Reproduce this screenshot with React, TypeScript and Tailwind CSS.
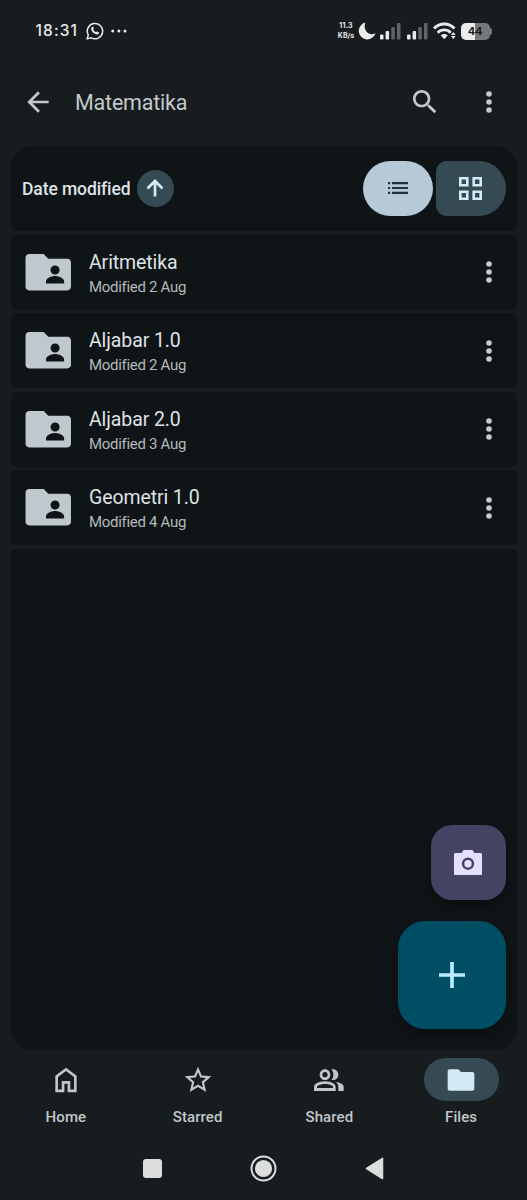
import clsx from 'clsx'
import type { ReactNode } from 'react'

const files = [
  { name: 'Aritmetika', modified: 'Modified 2 Aug' },
  { name: 'Aljabar 1.0', modified: 'Modified 2 Aug' },
  { name: 'Aljabar 2.0', modified: 'Modified 3 Aug' },
  { name: 'Geometri 1.0', modified: 'Modified 4 Aug' },
]

const tabs = [
  { label: 'Home', icon: 'M6 19.2h2.8v-6.4h6.4v6.4H18v-9.4L12 5.3 6 9.8v9.4zM4 21.2V8.8l8-6 8 6v12.4h-6.8v-6.4h-2.4v6.4H4z' },
  {
    label: 'Starred',
    icon: 'M22 9.24l-7.19-.62L12 2 9.19 8.63 2 9.24l5.46 4.73L5.82 21 12 17.27 18.18 21l-1.63-7.03L22 9.24zM12 15.4l-3.76 2.27 1-4.28-3.32-2.88 4.38-.38L12 6.1l1.71 4.04 4.38.38-3.32 2.88 1 4.28L12 15.4z',
  },
  {
    label: 'Shared',
    icon: 'M.8 20.2v-3c0-1.1.6-2.1 1.55-2.64C4.4 13.6 6.6 13 9 13s4.6.6 6.45 1.56C16.4 15.1 17 16.1 17 17.2v3H.8zm18.2 0V17c0-1.5-.75-2.85-2.1-3.75 1.55.2 3 .65 4.2 1.3 1.15.65 1.9 1.45 1.9 2.45v3.2h-4zM9 12c-2.2 0-4-1.8-4-4s1.8-4 4-4 4 1.8 4 4-1.8 4-4 4zm10-4c0 2.2-1.8 4-4 4-.3 0-.8-.1-1.1-.2.9-1.1 1.4-2.3 1.4-3.8s-.5-2.7-1.4-3.8C14.2 4.1 14.7 4 15 4c2.2 0 4 1.8 4 4zM3 18h12v-.8c0-.4-.2-.7-.5-.9-1.65-.82-3.5-1.3-5.5-1.3s-3.85.48-5.5 1.3c-.3.2-.5.5-.5.9v.8zm6-8c1.1 0 2-.9 2-2s-.9-2-2-2-2 .9-2 2 .9 2 2 2z',
  },
  {
    label: 'Files',
    icon: 'M3.5 20c-.9 0-1.5-.6-1.5-1.5v-13C2 4.6 2.6 4 3.5 4H10l2 2h8.5c.9 0 1.5.6 1.5 1.5v11c0 .9-.6 1.5-1.5 1.5z',
    active: true,
  },
]

function Icon({ className, children }: { className?: string; children: ReactNode }) {
  return (
    <svg viewBox="0 0 24 24" fill="currentColor" fillRule="evenodd" className={clsx('shrink-0', className)}>
      {children}
    </svg>
  )
}

function MoreIcon() {
  return (
    <Icon className="size-8">
      <circle cx="12" cy="6" r="2.1" />
      <circle cx="12" cy="12" r="2.1" />
      <circle cx="12" cy="18" r="2.1" />
    </Icon>
  )
}

function SignalIcon() {
  return (
    <svg width="21" height="17" viewBox="0 0 21 17" fill="currentColor" className="shrink-0">
      <rect x="0" y="11.5" width="3.5" height="5" rx="1" />
      <rect x="5.6" y="8" width="3.5" height="8.5" rx="1" />
      <rect x="11.3" y="4" width="3.5" height="12.5" rx="1" opacity=".35" />
      <rect x="17" y="0" width="3.5" height="16.5" rx="1" opacity=".35" />
    </svg>
  )
}

function StatusBar() {
  return (
    <div className="flex h-[62px] items-center pl-[35.5px] pr-[35.5px] text-[#e8eaeb]">
      <span className="w-[43px] whitespace-nowrap font-[Inter] text-[15.5px] font-medium tracking-[1.1px]">18:31</span>
      <svg width="18" height="18" viewBox="0 0 18 18" fill="none" className="ml-[7px] shrink-0">
        <path d="M1.1 16.9l1.2-4A7.7 7.7 0 1 1 5.2 15.8z" stroke="currentColor" strokeWidth="1.5" strokeLinejoin="round" />
        <path
          d="M6.2 4.8c.4-.3.9-.2 1.1.3l.5 1.2c.2.5-.6 1-.5 1.4.6 1.1 1.5 2 2.7 2.5.4.1.9-.9 1.3-.7l1.4.7c.5.3.4.8.1 1.2-.6.9-1.7 1.2-2.7.9-2.4-.8-4.3-2.5-4.9-4.8-.2-1 .2-2.1 1-2.7z"
          fill="currentColor"
        />
      </svg>
      <svg width="16" height="4" viewBox="0 0 16 4" fill="currentColor" className="ml-[7.5px] shrink-0">
        <circle cx="1.7" cy="2" r="1.5" />
        <circle cx="7.9" cy="2" r="1.5" />
        <circle cx="14" cy="2" r="1.5" />
      </svg>
      <div className="ml-auto flex items-center">
        <div className="mr-[3px] flex w-[17px] flex-col items-center whitespace-nowrap font-[Inter] text-[7px] font-bold leading-[10.5px]">
          <span className="tracking-[0.2px]">11.3</span>
          <span>KB/s</span>
        </div>
        <svg width="18" height="18" viewBox="0 0 18 18" fill="currentColor" className="shrink-0">
          <path d="M7.5.6a8.5 8.5 0 1 0 10 10.4c-2.3 1.7-5.9 1.7-8.1-.4C6.6 8 6 4 7.5.6z" />
        </svg>
        <div className="ml-[4px] flex gap-[6px]">
          <SignalIcon />
          <SignalIcon />
        </div>
        <svg width="24" height="18" viewBox="0 0 24 18" fill="none" stroke="currentColor" strokeWidth="2.8" className="ml-[5.5px] shrink-0">
          <path d="M1 6.5c5.7-6 14.8-6 20.5 0" />
          <path d="M4.7 10.7c3.7-3.7 9.4-3.7 13.1 0" />
          <path d="M7.8 13.6c2-2 4.9-2 6.9 0l-3.45 3.6z" fill="currentColor" stroke="none" />
          <path d="M17.9 12.9l2.4-2.9 2.4 2.9zM17.9 14.1l2.4 2.9 2.4-2.9z" fill="currentColor" stroke="none" />
        </svg>
        <div className="ml-[3.5px] flex items-center">
          <div className="flex h-[17px] w-[29px] items-center justify-center rounded-[5px] bg-[linear-gradient(90deg,#e8eaeb_48%,#76797b_48%)] font-[Inter] text-[11px] font-bold tracking-[-0.3px] text-[#171c1e]">
            44
          </div>
          <div className="h-[7px] w-[2px] rounded-r-full bg-[#76797b]" />
        </div>
      </div>
    </div>
  )
}

function AppBar() {
  return (
    <header className="flex h-[83.5px] items-center pb-[4px] pl-[21.5px] pr-[22px] text-[#c4c9cc]">
      <Icon className="size-8">
        <path d="M20 11H7.83l5.59-5.59L12 4l-8 8 8 8 1.41-1.41L7.83 13H20v-2z" />
      </Icon>
      <h1 className="ml-[21.5px] pt-[2px] text-[21.5px] tracking-[-0.2px]">Matematika</h1>
      <Icon className="ml-auto size-8">
        <path d="M15.5 14h-.79l-.28-.27C15.41 12.59 16 11.11 16 9.5 16 5.91 13.09 3 9.5 3S3 5.91 3 9.5 5.91 16 9.5 16c1.61 0 3.09-.59 4.23-1.57l.27.28v.79l5 4.99L20.49 19l-4.99-5zm-6 0C7.01 14 5 11.99 5 9.5S7.01 5 9.5 5 14 7.01 14 9.5 11.99 14 9.5 14z" />
      </Icon>
      <div className="ml-[32px]">
        <MoreIcon />
      </div>
    </header>
  )
}

function ListHeader() {
  return (
    <div className="flex h-[85.5px] shrink-0 items-center rounded-b-[5px] rounded-t-[22px] bg-[#0f1416] px-[11px]">
      <span className="w-[109px] whitespace-nowrap pt-px text-[17.5px] font-medium tracking-[-0.1px] text-[#dee3e6]">
        Date modified
      </span>
      <button className="ml-[5.5px] flex size-[37.5px] items-center justify-center rounded-full bg-[#354a53] text-[#d2ecf7]">
        <svg width="18" height="18" viewBox="0 0 18 18" fill="none" stroke="currentColor" strokeWidth="2.7">
          <path d="M9 17.5V2M1.500 9.500L9 2l7.500 7.500" />
        </svg>
      </button>
      <div className="ml-auto flex gap-[2.5px]">
        <button className="flex h-[54.5px] w-[70px] items-center justify-center rounded-full bg-[#b5cad6] text-[#20333c]">
          <svg width="20" height="12" viewBox="0 0 20 12" fill="currentColor">
            <path d="M0 0h2.2v2.2H0zM4 0h16v2.2H4zM0 4.9h2.2v2.2H0zM4 4.9h16v2.2H4zM0 9.8h2.2V12H0zM4 9.8h16V12H4z" />
          </svg>
        </button>
        <button className="flex h-[54.5px] w-[70px] items-center justify-center rounded-l-[11px] rounded-r-[27.25px] bg-[#354a53] text-[#d2ecf7]">
          <svg width="23" height="23" viewBox="0 0 23 23" fill="none" stroke="currentColor" strokeWidth="2.6">
            <path d="M1.3 1.3h7v7h-7zM14.7 1.3h7v7h-7zM1.3 14.7h7v7h-7zM14.7 14.7h7v7h-7z" />
          </svg>
        </button>
      </div>
    </div>
  )
}

function FileRow({ name, modified }: { name: string; modified: string }) {
  return (
    <li className="flex h-[75px] shrink-0 items-center rounded-[5px] bg-[#0f1416] pl-[10px] pr-[11.5px]">
      <Icon className="size-[54.5px] text-[#bfc8cd]">
        <path d="M20.4 6H12l-2-2H3.6C2.7 4 2 4.7 2 5.6v12.8c0 .9.7 1.6 1.6 1.6h16.8c.9 0 1.6-.7 1.6-1.6V7.6c0-.9-.7-1.6-1.6-1.6zM15 9c1.1 0 2 .9 2 2s-.9 2-2 2-2-.9-2-2 .9-2 2-2zm4 7.9h-8v-.9c0-1.33 2.4-2.3 4-2.3s4 .97 4 2.3v.9z" />
      </Icon>
      <div className="ml-[13.5px] pt-[5px]">
        <div className="text-[19.5px] leading-[25px] tracking-[-0.1px] text-[#dee3e6]">{name}</div>
        <div className="text-[15px] leading-[25px] tracking-[-0.3px] text-[#b4babd]">{modified}</div>
      </div>
      <div className="ml-auto text-[#c9cccd]">
        <MoreIcon />
      </div>
    </li>
  )
}

function BottomNav() {
  return (
    <nav className="grid grid-cols-4 pt-[8px]">
      {tabs.map(({ label, icon, active }) => (
        <div key={label} className="flex flex-col items-center text-[#c0c7cb]">
          <div
            className={clsx(
              'flex h-[43px] w-[75px] items-center justify-center rounded-full',
              active && 'bg-[#354a53] text-[#d2e8f5]'
            )}
          >
            <Icon className="size-8">
              <path d={icon} />
            </Icon>
          </div>
          <span className="mt-[6px] text-[15px] font-medium leading-[20px] tracking-[0.1px]">{label}</span>
        </div>
      ))}
    </nav>
  )
}

function SystemNav() {
  return (
    <div className="mt-auto flex h-[63px] items-center justify-center pr-[0.5px] text-[#dcdedd]">
      <div className="size-[19px] rounded-[3px] bg-[#dcdedd]" />
      <svg width="27" height="27" viewBox="0 0 27 27" className="ml-[88px]">
        <circle cx="13.5" cy="13.5" r="12" fill="none" stroke="currentColor" strokeWidth="2" />
        <circle cx="13.5" cy="13.5" r="8.6" fill="currentColor" />
      </svg>
      <svg width="19" height="23" viewBox="0 0 19 23" className="ml-[88px]">
        <path d="M17.5 1.5v20L1.5 11.5z" fill="currentColor" stroke="currentColor" strokeWidth="1.5" strokeLinejoin="round" />
      </svg>
    </div>
  )
}

export default function App() {
  return (
    <div className="flex h-[1200px] w-[527px] flex-col overflow-hidden bg-[#171c1e] font-[Roboto,sans-serif]">
      <StatusBar />
      <AppBar />
      <main className="relative ml-[11px] mr-[10.5px] flex h-[904.5px] flex-col gap-[3.5px]">
        <ListHeader />
        <ul className="flex flex-col gap-[3.5px]">
          {files.map(file => (
            <FileRow key={file.name} {...file} />
          ))}
        </ul>
        <div className="flex-1 rounded-b-[22px] rounded-t-[5px] bg-[#0f1416]" />

        {/* floating actions over the list */}
        <div className="absolute bottom-[21.5px] right-[11px] flex flex-col items-end gap-[21.5px]">
          <button className="flex size-[75px] items-center justify-center rounded-[21px] bg-[#454364] text-[#e4dfff] shadow-[0_4px_8px_rgba(0,0,0,0.35)]">
            <svg width="28" height="25" viewBox="0 0 28 25" fill="currentColor" fillRule="evenodd">
              <path d="M1.6 3h6l1.6-2.4C9.5.2 10 0 10.5 0h7c.5 0 1 .2 1.3.6L20.4 3h6c.9 0 1.6.7 1.6 1.6v18.800c0 .9-.7 1.600-1.600 1.600H1.600C.7 25 0 24.300 0 23.400V4.600C0 3.700.7 3 1.600 3zM14 7.500a6.200 6.200 0 1 0 0 12.400 6.200 6.200 0 0 0 0-12.400zm0 2.500a3.700 3.700 0 1 1 0 7.400 3.700 3.700 0 0 1 0-7.400z" />
            </svg>
          </button>
          <button className="flex size-[107.5px] items-center justify-center rounded-[27px] bg-[#004e63] text-[#b9eaff] shadow-[0_4px_8px_rgba(0,0,0,0.35)]">
            <svg width="26" height="26" viewBox="0 0 26 26" stroke="currentColor" strokeWidth="3.7">
              <path d="M13 0v26M0 13h26" />
            </svg>
          </button>
        </div>
      </main>
      <BottomNav />
      <SystemNav />
    </div>
  )
}
